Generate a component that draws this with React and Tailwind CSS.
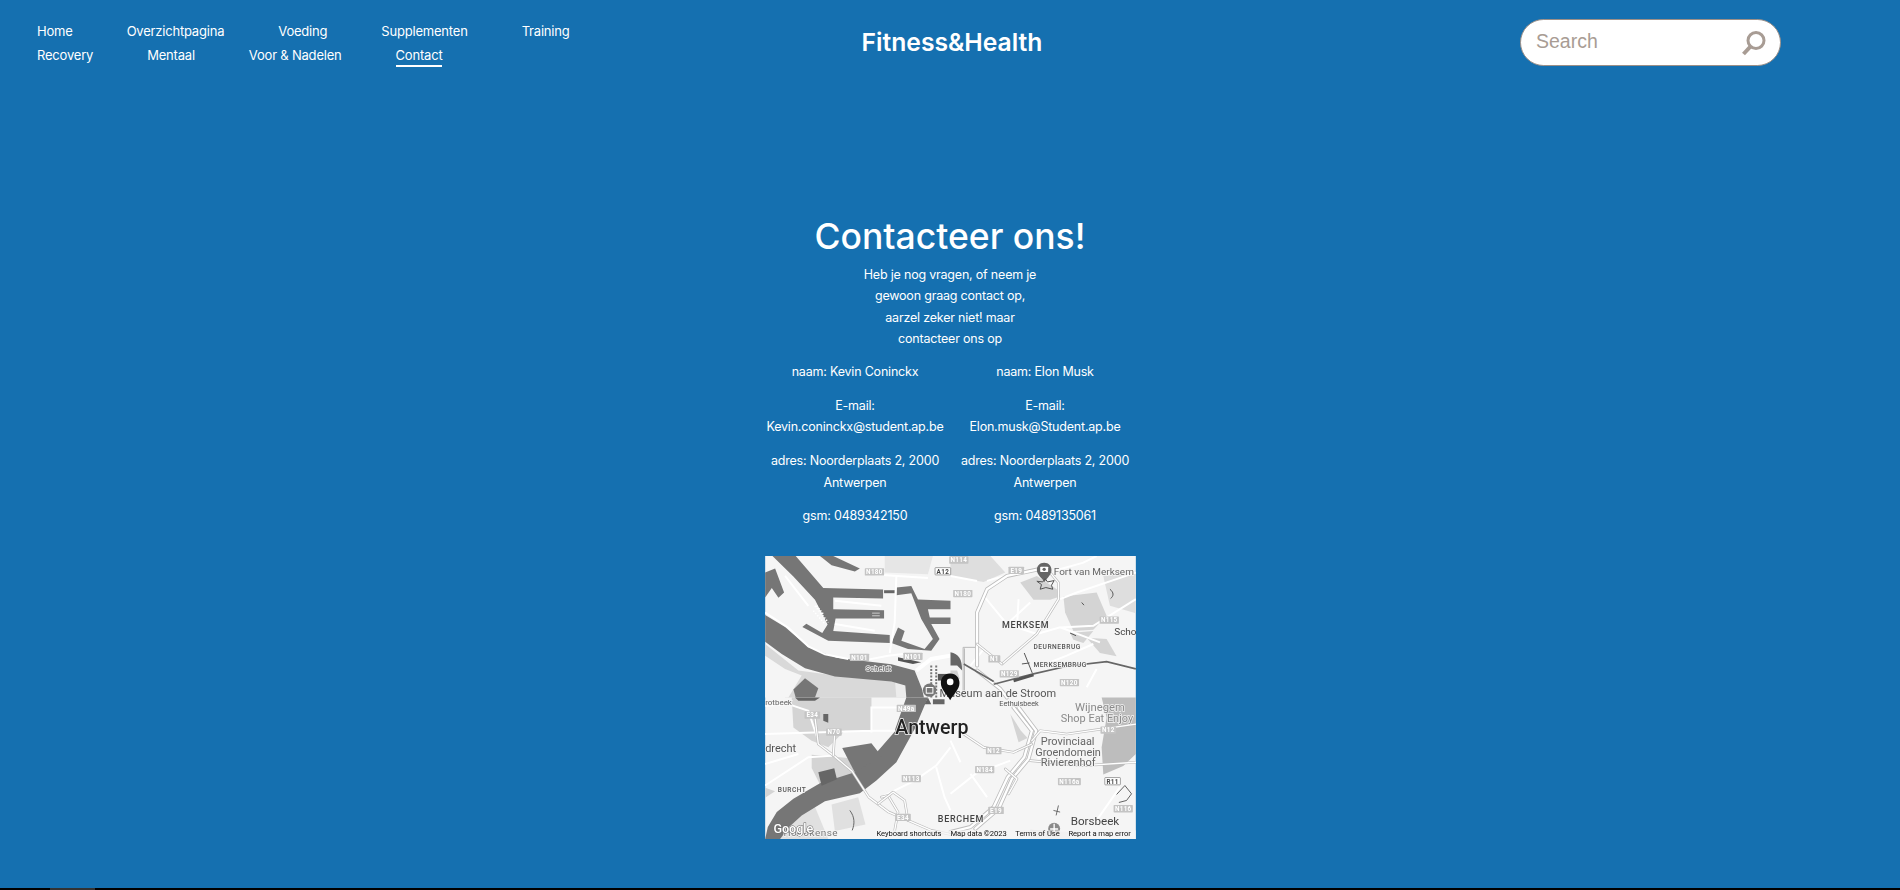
import { useState } from "react";

const navItems = [
  "Home",
  "Overzichtpagina",
  "Voeding",
  "Supplementen",
  "Training",
  "Recovery",
  "Mentaal",
  "Voor & Nadelen",
  "Contact",
];

const contacts = [
  {
    name: "naam: Kevin Coninckx",
    email: "Kevin.coninckx@student.ap.be",
    phone: "gsm: 0489342150",
  },
  {
    name: "naam: Elon Musk",
    email: "Elon.musk@Student.ap.be",
    phone: "gsm: 0489135061",
  },
];

const WATER = "#767676";
const GREEN = "#d4d4d4";

// grey casing with a white core, the way the map draws its motorways
const Road = ({ d, wide }) => (
  <g fill="none" strokeLinejoin="round" strokeLinecap="round">
    <path d={d} stroke="#bcbcbc" strokeWidth={wide ? 12 : 8} />
    <path d={d} stroke="#ffffff" strokeWidth={wide ? 7 : 4} />
  </g>
);

const Badge = ({ x, y, label, plain }) => {
  const w = label.length * 11 + 14;
  return (
    <g>
      <rect
        x={x - w / 2}
        y={y - 11}
        width={w}
        height={22}
        fill={plain ? "#ffffff" : "#c4c4c4"}
        stroke={plain ? "#777777" : "none"}
        strokeWidth={plain ? 2 : 0}
        rx={2}
      />
      <text
        x={x}
        y={y + 7}
        textAnchor="middle"
        fontSize="19"
        fontWeight="700"
        fontFamily="Roboto, sans-serif"
        letterSpacing="1"
        fill={plain ? "#444444" : "#ffffff"}
      >
        {label}
      </text>
    </g>
  );
};

const Label = ({ x, y, size = 30, color = "#666666", spacing = 0, weight = 400, children }) => (
  <text
    x={x}
    y={y}
    fontSize={size}
    fontWeight={weight}
    fill={color}
    letterSpacing={spacing}
    fontFamily="Roboto, sans-serif"
    stroke="#f5f5f5"
    strokeWidth="4"
    paintOrder="stroke"
  >
    {children}
  </text>
);

// drawn in 3x units, one group per tile of 558 x 426
const MapPicture = () => (
  <svg viewBox="0 0 1116 852" className="block h-full w-full blur-[0.5px]">
    <rect width="1116" height="852" fill="#f5f5f5" />

    {/* top left: docks and river */}
    <g>
      <path d="M360 0H505L490 55L360 50Z" fill="#e6e6e6" />
      <path d="M0 265L100 345L250 365L440 375V426H60L0 330Z" fill="#d9d9d9" />
      <path d="M0 300L60 340L110 360L70 426H0Z" fill="#f5f5f5" />
      <path d="M390 365L432 385V426H395Z" fill="#ececec" />
      <path d="M85 402L120 368L160 398L150 426H92Z" fill={WATER} />
      <path
        d="M22 0H92L175 96L355 101V128L205 125V160L358 163V188L212 188L205 226L375 238V262L190 255L112 214L124 204L172 232L188 206L150 132L85 62Z"
        fill={WATER}
      />
      <path d="M0 50L30 38L57 110L40 126L20 96L0 125Z" fill={WATER} />
      <path d="M165 0H205L285 38L270 47L200 28Z" fill={WATER} />
      <path
        d="M395 95L440 90L460 131L558 135V160L490 160L500 205L525 250L500 285L430 280L380 262L400 215L420 226L410 255L480 280L505 250L470 190L440 112L395 118Z"
        fill={WATER}
      />
      <path d="M358 103H390V112H358Z" fill="#666666" />
      <path d="M490 185H558V205H497Z" fill={WATER} />
      <path
        d="M0 178L60 214L130 275L215 306L380 326L450 345L472 400L478 426H425L422 390L380 378L210 363L120 338L50 295L0 258Z"
        fill={WATER}
      />
      <path d="M150 150L190 200M145 165L180 205M155 150L175 175" stroke="#ffffff" strokeWidth="5" strokeDasharray="4 5" fill="none" />
      <path d="M322 172H345M322 180H345" stroke="#cccccc" strokeWidth="3" />
      <path d="M400 305L470 320L445 325L400 315Z" fill="#555555" />
      <path d="M0 170L70 216L130 272L180 296L250 310M310 312L370 300L415 295M330 56L490 66M395 60L390 200L375 292M60 60L130 150M210 205L330 225M210 135L350 150" stroke="#ffffff" strokeWidth="6" fill="none" />
      <path d="M455 345L500 310L558 300" stroke="#ffffff" strokeWidth="12" fill="none" />
      <path d="M500 330L500 426M515 330L515 426" stroke="#777777" strokeWidth="6" strokeDasharray="6 4" />
      <path d="M520 355H558V375H520Z" fill="#555555" />
    </g>

    {/* top right: Merksem */}
    <g transform="translate(558 0)">
      <path d="M0 0H120L165 50L100 78L0 62Z" fill="#dedede" />
      <path d="M210 80L260 60L320 100L330 122L300 132L250 132Z" fill={GREEN} />
      <path d="M340 122L440 110L470 180L430 222L370 226L345 170Z" fill={GREEN} />
      <path d="M360 232L430 226L400 262L370 252Z" fill={GREEN} />
      <path d="M410 246L470 250L500 302L450 292Z" fill={GREEN} />
      <path d="M460 60L558 50V172L480 150Z" fill="#dedede" />
      <path d="M0 290C25 295 35 310 35 345L20 330H0Z" fill="#666666" />
      <path d="M0 345L20 345L28 370H0Z" fill="#d0d0d0" />
      <path d="M0 60L80 75M110 75L200 50M310 45L400 20L440 0M100 120L170 205L260 235M170 205L240 140M205 130L200 215M260 235L330 215L450 260M330 215L430 210L558 130M380 110L558 50M380 110L330 130M100 280L60 330M300 320L350 300L430 265M410 395L440 340" stroke="#ffffff" strokeWidth="6" fill="none" />
      <path d="M38 426V275H78M42 278V426" stroke="#b8b8b8" strokeWidth="3" fill="none" />
      <Road wide d="M80 330V170L110 100L170 60L265 40" />
      <Road d="M155 325L260 235L325 130V80L300 50" />
      <Road d="M80 265L155 325" />
      <Road d="M80 345L150 400L170 426" wide />
      <path d="M40 325L130 378" stroke="#666666" strokeWidth="5" fill="none" />
      <path d="M130 386L250 355L350 332L470 318L558 340" stroke="#666666" strokeWidth="5" fill="none" />
      <path d="M190 376L250 358" stroke="#555555" strokeWidth="9" fill="none" />
      <path d="M222 292L246 352M215 325L238 322" stroke="#555555" strokeWidth="3" fill="none" />
      <path d="M360 232L378 240M480 100C492 110 492 120 482 128M395 140L402 148" stroke="#555555" strokeWidth="3" fill="none" />
    </g>

    {/* bottom left: river towards Hoboken */}
    <g transform="translate(0 426)">
      <path d="M80 0H320V100L240 100L190 150L140 130L85 90Z" fill={GREEN} />
      <path d="M140 172L250 182L272 232L170 272L140 212Z" fill={GREEN} />
      <path d="M0 272L30 282L0 302Z" fill={GREEN} />
      <path d="M200 322L280 300L302 382L210 402Z" fill="#e0e0e0" />
      <path d="M60 340L150 330L190 426H40Z" fill="#e0e0e0" />
      <path
        d="M425 0H490L450 95L395 195L335 250L285 288L180 312L110 355L72 390L45 426H0L8 390L35 345L85 305L165 258L270 225L325 178L388 105Z"
        fill={WATER}
      />
      <path d="M232 152L320 138L350 176L270 226Z" fill={WATER} />
      <path d="M160 225L208 213L216 246L170 266Z" fill="#666666" />
      <path d="M175 50H190V76L175 70Z" fill="#666666" />
      <path d="M90 0H165L150 10H100Z" fill="#666666" />
      <path d="M490 0L500 20H480ZM505 5H540V20H505Z" fill="#666666" />
      <path d="M0 25L70 20L130 40L160 130M320 105V30H400M0 110L320 100L392 100M0 265L130 180L210 175M350 300L450 250L515 205L558 150M515 210L540 300L558 340M0 200L100 170" stroke="#ffffff" strokeWidth="6" fill="none" />
      <Road d="M150 60L160 140L210 178L262 222L312 300L372 345L500 400L558 412" />
      <Road d="M210 100L205 175" />
      <Road d="M350 300L370 295L400 345L390 400" />
      <Road d="M340 320L385 285L420 310L430 370" />
      <path d="M255 340C270 360 270 380 262 400" stroke="#666666" strokeWidth="3" fill="none" />
    </g>

    {/* bottom right: Deurne and Rivierenhof */}
    <g transform="translate(558 426)">
      <path d="M455 0H558V170L520 206L460 232L455 150L470 60Z" fill="#bdbdbd" />
      <path d="M180 50L212 100L232 122L205 135Z" fill={GREEN} />
      <path d="M240 398L360 405V426H240Z" fill="#e4e4e4" />
      <path d="M0 290L75 230L180 190M0 130L30 195M260 180L400 205M60 230L110 300M440 370L510 270" stroke="#ffffff" strokeWidth="6" fill="none" />
      <Road wide d="M190 30L245 100L222 180L172 240L130 330L60 390L0 405" />
      <Road wide d="M205 30L258 100L235 185L185 245L145 335L75 395" />
      <Road d="M245 130L270 100L350 110L558 80" />
      <Road d="M40 110L100 150L190 165L245 140" />
      <Road d="M240 190L400 205L558 195" />
      <Road d="M165 215L200 245L175 290" />
      <path d="M500 292L525 265L545 290L530 310L507 316" stroke="#444444" strokeWidth="2.5" fill="none" />
      <path d="M325 325L318 355M310 340L330 345" stroke="#555555" strokeWidth="2.5" fill="none" />
      <circle cx="312" cy="395" r="18" fill="#8a8a8a" />
      <path d="M312 380V410M300 396L324 396M304 408H320" stroke="#ffffff" strokeWidth="4" fill="none" />
    </g>

    {/* labels go over every tile */}
    <g>
      <Label x={303} y={346} size={23} color="#555555">Scheldt</Label>
      <Label x={525} y={423} size={33} color="#555555">Museum aan de Stroom</Label>
      <Badge x={329} y={48} label="N180" />
      <Badge x={535} y={46} label="A12" plain />
      <Badge x={284} y={305} label="N101" />
      <Badge x={445} y={302} label="N101" />
      <circle cx="495" cy="404" r="20" fill="#777777" />
      <rect x="485" y="396" width="20" height="17" fill="none" stroke="#ffffff" strokeWidth="3" />
    </g>
    <g transform="translate(558 0)">
      <Badge x={25} y={12} label="N114" />
      <Badge x={198} y={43} label="E19" />
      <Badge x={37} y={113} label="N180" />
      <Badge x={478} y={193} label="N115" />
      <Badge x={132} y={310} label="N1" />
      <Badge x={177} y={355} label="N129" />
      <Badge x={358} y={381} label="N120" />
      <Label x={311} y={58} size={30} color="#666666">Fort van Merksem</Label>
      <Label x={493} y={237} size={30} color="#444444">Scho</Label>
      <Label x={155} y={218} size={27} color="#444444" spacing={2} weight={500}>MERKSEM</Label>
      <Label x={250} y={279} size={20} color="#555555" spacing={1.5} weight={500}>DEURNEBRUG</Label>
      <Label x={250} y={335} size={20} color="#555555" spacing={1.2} weight={500}>MERKSEMBRUG</Label>
      <path d="M282 20C268 20 260 30 260 42C260 56 275 66 283 78C291 66 304 56 304 42C304 30 296 20 282 20Z" fill="#666666" />
      <rect x="270" y="32" width="24" height="16" rx="2" fill="#ffffff" />
      <circle cx="282" cy="40" r="5" fill="#666666" />
      <path d="M285 68L292 78L312 74L304 88L308 100L287 95L270 100L274 86L260 76L278 78Z" fill="none" stroke="#555555" strokeWidth="3" />
    </g>
    <g transform="translate(0 426)">
      <Label x={0} y={22} size={24} color="#666666">rotbeek</Label>
      <Label x={0} y={165} size={33} color="#555555">drecht</Label>
      <Label x={38} y={285} size={20} color="#555555" spacing={1.5} weight={500}>BURCHT</Label>
      <Label x={55} y={417} size={30} color="#777777" spacing={1.5}>Hobokense</Label>
      <Label x={520} y={375} size={27} color="#444444" spacing={2} weight={500}>BERCHEM</Label>
      <Badge x={142} y={53} label="E34" />
      <Badge x={207} y={104} label="N70" />
      <Badge x={425} y={33} label="N49a" />
      <Badge x={440} y={244} label="N113" />
      <Badge x={415} y={361} label="E34" />
      <Label x={392} y={110} size={59} color="#222222" weight={500}>Antwerp</Label>
      <text
        x={25}
        y={408}
        fontSize="38"
        fontFamily="Roboto, sans-serif"
        fontWeight="500"
        fill="#ffffff"
        stroke="#666666"
        strokeWidth="3"
        paintOrder="stroke"
      >
        Google
      </text>
    </g>
    <g transform="translate(558 426)">
      <Label x={147} y={25} size={22} color="#555555">Eethuisbeek</Label>
      <Label x={375} y={42} size={34} color="#8a8a8a">Wijnegem</Label>
      <Label x={332} y={75} size={33} color="#8a8a8a">Shop Eat Enjoy</Label>
      <Label x={272} y={142} size={33} color="#666666">Provinciaal</Label>
      <Label x={255} y={175} size={33} color="#666666">Groendomein</Label>
      <Label x={272} y={207} size={33} color="#666666">Rivierenhof</Label>
      <Label x={362} y={385} size={35} color="#444444">Borsbeek</Label>
      <Badge x={475} y={98} label="N12" />
      <Badge x={130} y={160} label="N12" />
      <Badge x={103} y={217} label="N184" />
      <Badge x={358} y={253} label="N116a" />
      <Badge x={488} y={252} label="R11" plain />
      <Badge x={137} y={340} label="E19" />
      <Badge x={520} y={335} label="N116" />
    </g>

    {/* attribution strip */}
    <rect x="330" y="826" width="786" height="26" fill="#f5f5f5" fillOpacity="0.75" />
    <g fontSize="23" fontFamily="Roboto, sans-serif" fill="#111111">
      <text x="335" y="843">Keyboard shortcuts</text>
      <text x="558" y="843">Map data ©2023</text>
      <text x="753" y="843">Terms of Use</text>
      <text x="913" y="843">Report a map error</text>
    </g>

    {/* place marker */}
    <path d="M557 354C538 354 529 368 529 382C529 402 548 416 557 434C566 416 585 402 585 382C585 368 576 354 557 354Z" fill="#111111" />
    <circle cx="557" cy="379" r="10" fill="#ffffff" />
  </svg>
);

const Search = () => {
  const [query, setQuery] = useState("");

  return (
    <form
      className="flex h-[47px] w-[261px] items-center justify-between rounded-full border border-[#9c8f87] bg-white pl-[15px] pr-[14px]"
      onSubmit={(e) => e.preventDefault()}
    >
      <input
        value={query}
        onChange={(e) => setQuery(e.target.value)}
        placeholder="Search"
        className="-mt-px w-[190px] bg-transparent font-['Liberation_Sans',sans-serif] text-[19.5px] text-[#a89c94] outline-none placeholder:text-[#a89c94]"
      />
      <button type="button" aria-label="Search">
        <svg width="25" height="26" viewBox="0 0 25 26" className="block">
          <circle cx="15" cy="10.5" r="8" fill="none" stroke="#a89c94" strokeWidth="3" />
          <path d="M9.5 16.5L2.5 24" stroke="#a89c94" strokeWidth="4" />
        </svg>
      </button>
    </form>
  );
};

const App = () => {
  return (
    <div className="min-h-[890px] bg-[#1570b0] font-['Inter',sans-serif] text-white">
      <div className="h-[888px]">
        {/* Header */}
        <header className="grid grid-cols-3 items-center pt-[18px]">
          <nav className="flex w-[620px] flex-wrap gap-x-[54px] pl-[37px] pr-10 pt-px text-[13px] leading-6">
            {navItems.map((item) => (
              <a key={item} href="#" className="tracking-[-0.2px]">
                <span className={item === "Contact" ? "border-b-2 border-white pb-[2px]" : ""}>{item}</span>
              </a>
            ))}
          </nav>
          <div className="pl-1 text-center text-[24.7px] font-semibold leading-none">Fitness&amp;Health</div>
          <div className="flex justify-end pr-[119px]">
            <Search />
          </div>
        </header>

        {/* Contact */}
        <main className="mx-auto mt-[144px] w-[380px] text-center text-[12.5px] leading-[21.33px] tracking-[-0.2px]">
          <h1 className="text-[35.5px] font-medium leading-[52px] tracking-normal">Contacteer ons!</h1>
          <p className="mt-px">
            Heb je nog vragen, of neem je
            <br />
            gewoon graag contact op,
            <br />
            aarzel zeker niet! maar
            <br />
            contacteer ons op
          </p>
          <div className="mt-[12px] grid grid-cols-2">
            {contacts.map((contact) => (
              <div key={contact.name} className="flex flex-col gap-[12.5px]">
                <p>{contact.name}</p>
                <p>
                  E-mail:
                  <br />
                  {contact.email}
                </p>
                <p>
                  adres: Noorderplaats 2, 2000
                  <br />
                  Antwerpen
                </p>
                <p>{contact.phone}</p>
              </div>
            ))}
          </div>
          <div className="mx-auto mt-[29px] h-[283px] w-[371px]">
            <MapPicture />
          </div>
        </main>
      </div>

      {/* sliver of the taskbar along the bottom */}
      <div className="flex h-[2px] bg-black">
        <div className="ml-[50px] w-[45px] bg-[#333333]" />
      </div>
    </div>
  );
};

export default App;
